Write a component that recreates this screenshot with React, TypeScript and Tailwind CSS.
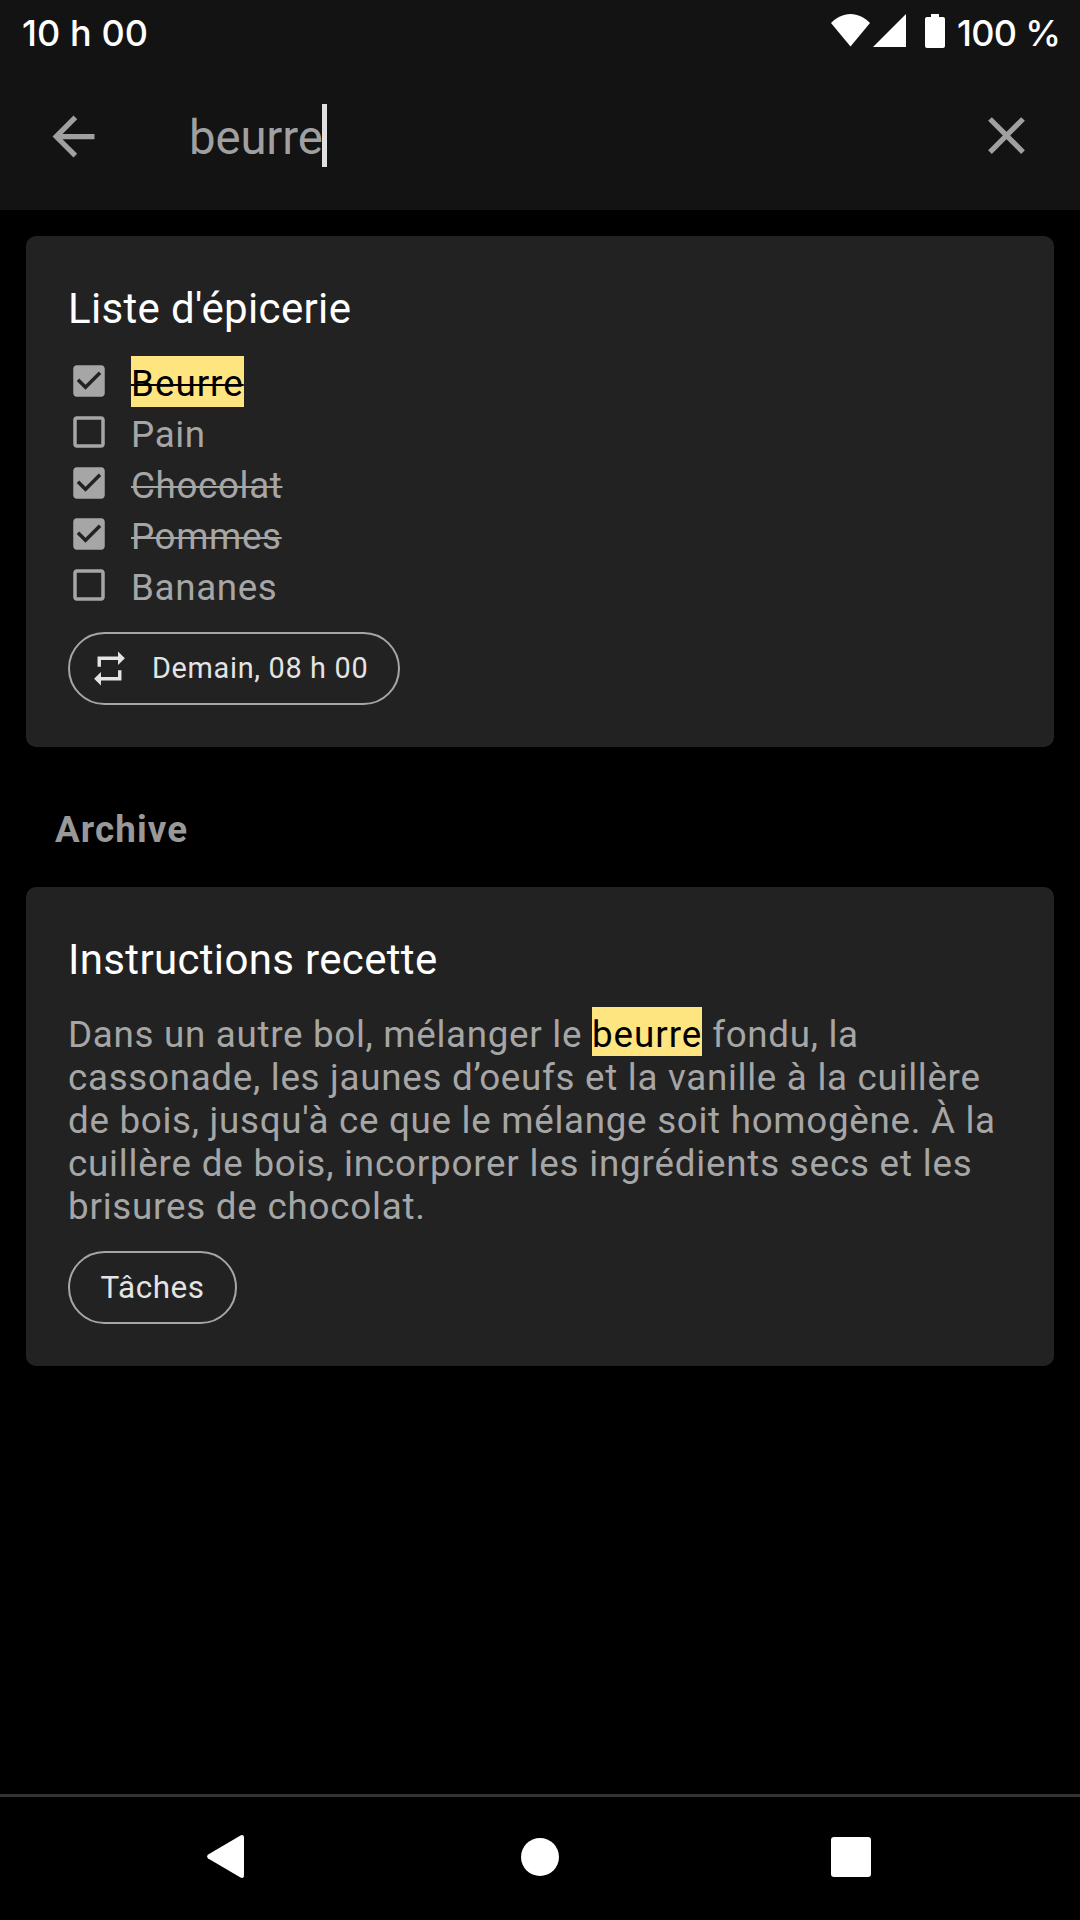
const CHECKED =
  "M19 3H5c-1.11 0-2 .9-2 2v14c0 1.1.89 2 2 2h14c1.11 0 2-.9 2-2V5c0-1.1-.89-2-2-2zm-9 14l-5-5 1.41-1.41L10 14.17l7.59-7.59L19 8l-9 9z";
const UNCHECKED =
  "M19 5v14H5V5h14m0-2H5c-1.1 0-2 .9-2 2v14c0 1.1.9 2 2 2h14c1.1 0 2-.9 2-2V5c0-1.1-.9-2-2-2z";
const REPEAT = "M7 7h10v3l4-4-4-4v3H5v6h2V7zm10 10H7v-3l-4 4 4 4v-3h12v-6h-2v4z";
const BACK = "M20 11H7.83l5.59-5.59L12 4l-8 8 8 8 1.41-1.41L7.83 13H20v-2z";
const CLOSE =
  "M19 6.41L17.59 5 12 10.59 6.41 5 5 6.41 10.59 12 5 17.59 6.41 19 12 13.41 17.59 19 19 17.59 13.41 12z";

function Icon({ d, className }: { d: string; className: string }) {
  return (
    <svg viewBox="0 0 24 24" fill="currentColor" className={className}>
      <path d={d} />
    </svg>
  );
}

const items = [
  { text: "Beurre", done: true, match: true },
  { text: "Pain", done: false, match: false },
  { text: "Chocolat", done: true, match: false },
  { text: "Pommes", done: true, match: false },
  { text: "Bananes", done: false, match: false },
];

function StatusBar() {
  return (
    <div className="flex h-[62px] items-start justify-between pl-[22px] pr-[21px] pt-[9px] font-['Inter'] text-[36px] leading-[48px] font-medium text-white">
      <span className="tracking-[0.1px] whitespace-nowrap">10 h 00</span>
      <div className="flex items-start">
        <svg viewBox="0 0 39 33" className="mt-[5px] h-[33px] w-[39px]" fill="currentColor">
          <path d="M0 9C5.5 3.5 12 0 19.5 0S33.500 3.500 39 9L19.500 32.500z" />
        </svg>
        <svg viewBox="0 0 33 33" className="mt-[5px] ml-[3px] h-[33px] w-[33px]" fill="currentColor">
          <path d="M33 0V33H0z" />
        </svg>
        <svg viewBox="0 0 20 34" className="mt-[5px] ml-[19px] h-[34px] w-[20px]" fill="currentColor">
          <path d="M6 0h8v3h4a2 2 0 0 1 2 2v27a2 2 0 0 1-2 2H2a2 2 0 0 1-2-2V5a2 2 0 0 1 2-2h4z" />
        </svg>
        <span className="ml-[12px] w-[102px] tracking-[-0.7px] whitespace-nowrap">100 %</span>
      </div>
    </div>
  );
}

export default function App() {
  return (
    <div className="flex h-[1920px] w-[1080px] flex-col overflow-hidden bg-black font-['Roboto',sans-serif]">
      <header className="h-[210px] bg-[#131313]">
        <StatusBar />
        <div className="flex items-start pl-[42px] pr-[42px] pt-[42px] text-[#a0a0a0]">
          <Icon d={BACK} className="mt-[1px] size-[63px]" />
          <div className="ml-[84px] flex flex-1 items-start">
            <span className="w-[133px] pt-[7px] text-[47.25px] leading-[55px] tracking-[-0.1px]">beurre</span>
            <span className="h-[63px] w-[5px] bg-[#e0e0e0]" />
          </div>
          <Icon d={CLOSE} className="size-[63px]" />
        </div>
      </header>

      <main className="flex-1 px-[26px] pt-[26px]">
        <section className="h-[511px] rounded-[10px] bg-[#222] px-[42px] pt-[48px]">
          <h2 className="text-[42px] leading-[49px] tracking-[0.34px] text-white">Liste d'épicerie</h2>
          <ul className="mt-[23px] text-[36.75px] text-[#a6a6a6]">
            {items.map((it) => (
              <li key={it.text} className="flex h-[51px] items-start gap-[21px]">
                <Icon d={it.done ? CHECKED : UNCHECKED} className="mt-[4px] size-[42px]" />
                <span
                  className={
                    "h-[51px] pt-[4px] leading-[47px] " +
                    (it.done ? "line-through decoration-2 " : "") +
                    (it.match ? "bg-[#ffe57f] tracking-[1px] text-black" : "tracking-[0.65px]")
                  }
                >
                  {it.text}
                </span>
              </li>
            ))}
          </ul>
          <div className="mt-[21px] flex h-[73px] w-[332px] items-center rounded-full border-2 border-[#a6a6a6] pl-[19px] text-[#e4e4e4]">
            <Icon d={REPEAT} className="size-[41px]" />
            <span className="ml-[22px] text-[28.875px] tracking-[0.68px] whitespace-nowrap">Demain, 08 h 00</span>
          </div>
        </section>

        <h3 className="mt-[61px] mb-[36px] pl-[29px] text-[36.75px] leading-[43px] font-bold tracking-[1.1px] text-[#999]">
          Archive
        </h3>

        <section className="h-[479px] rounded-[10px] bg-[#222] px-[42px] pt-[48px]">
          <h2 className="text-[42px] leading-[49px] tracking-[0.34px] text-white">Instructions recette</h2>
          <p className="mt-[29px] text-[36.75px] leading-[43px] tracking-[0.7px] whitespace-nowrap text-[#a6a6a6]">
            Dans un autre bol, mélanger le{" "}
            <mark className="bg-[#ffe57f] pt-[6px] tracking-[1px] text-black">beurre</mark> fondu, la
            <br />
            <span className="tracking-[0.71px]">cassonade, les jaunes d’oeufs et la vanille à la cuillère</span>
            <br />
            <span className="tracking-[0.71px]">de bois, jusqu'à ce que le mélange soit homogène. À la</span>
            <br />
            <span className="tracking-[0.8px]">cuillère de bois, incorporer les ingrédients secs et les</span>
            <br />
            <span className="tracking-[0.77px]">brisures de chocolat.</span>
          </p>
          <div className="mt-[23px] flex h-[73px] w-[169px] items-center justify-center rounded-full border-2 border-[#a6a6a6] text-[31.5px] tracking-[0.5px] text-[#e4e4e4]">
            Tâches
          </div>
        </section>
      </main>

      <nav className="flex h-[126px] items-center justify-between border-t-3 border-[#333] pr-[209px] pb-[4px] pl-[207px] text-white">
        <svg viewBox="0 0 37 43" className="h-[43px] w-[37px]" fill="currentColor">
          <path d="M1.200 19.500 33.500 .5Q37 -1 37 3V40Q37 44 33.500 42.500L1.200 23.500Q-1 21.500 1.200 19.500z" />
        </svg>
        <span className="ml-[4px] size-[38px] rounded-full bg-white" />
        <span className="size-[40px] rounded-[3px] bg-white" />
      </nav>
    </div>
  );
}
